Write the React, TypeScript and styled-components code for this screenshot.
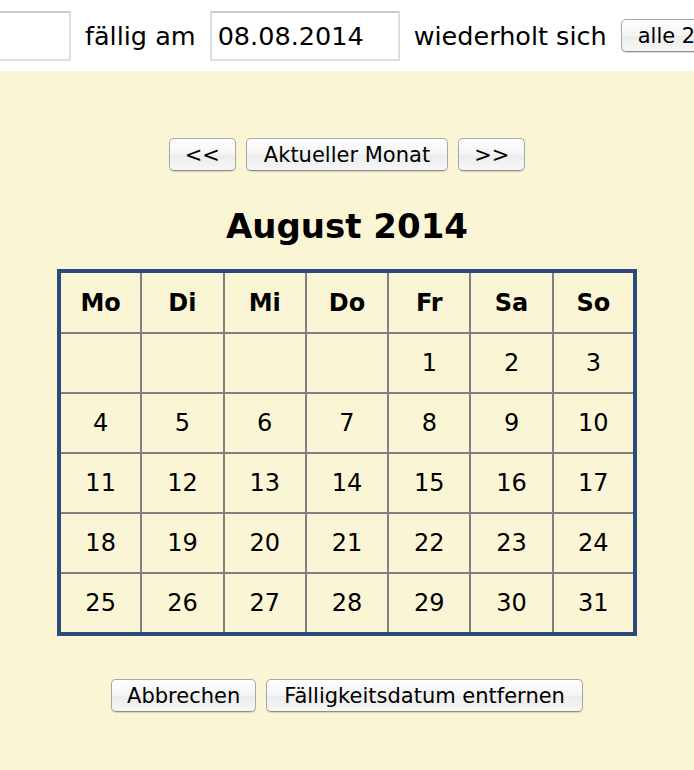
import React from "react";
import styled, { createGlobalStyle } from "styled-components";

const Global = createGlobalStyle`
  html, body { margin: 0; padding: 0; background: #faf6d5; }
  body { font-family: "DejaVu Sans", Verdana, sans-serif; overflow: hidden; }
`;

const Page = styled.div`
  width: 694px;
  height: 770px;
  display: flex;
  flex-direction: column;
  overflow: hidden;
`;

const TopBar = styled.div`
  background: #ffffff;
  height: 71px;
  display: flex;
  align-items: center;
  white-space: nowrap;
  overflow: hidden;
  font-family: "DejaVu Sans", sans-serif;
  font-size: 25.5px;
  color: #000;
`;

const TextField = styled.div<{ $w: number; $ml?: number }>`
  box-sizing: border-box;
  flex: none;
  width: ${(p) => p.$w}px;
  height: 50px;
  margin-left: ${(p) => p.$ml ?? 0}px;
  border: 2px solid #dedede;
  border-top-color: #cacaca;
  background: #fff;
  display: flex;
  align-items: center;
  padding-left: 6px;
  font-size: 25.5px;
`;

const Label = styled.span<{ $ml: number }>`
  flex: none;
  margin-left: ${(p) => p.$ml}px;
`;

const Button = styled.button<{ $px?: number }>`
  flex: none;
  box-sizing: border-box;
  height: 33px;
  padding: 0 ${(p) => p.$px ?? 15}px;
  font-family: "DejaVu Sans", sans-serif;
  font-size: 21px;
  color: #000;
  background: linear-gradient(#ffffff, #f4f4f4 50%, #ececec 51%, #f6f6f6);
  border: 1px solid #a8a8a8;
  border-bottom-color: #8e8e8e;
  border-radius: 5px;
  box-shadow: 0 1px 1px rgba(0, 0, 0, 0.15);
  cursor: default;
`;

const TopButton = styled(Button)`
  margin-left: 14px;
  padding: 0 16px;
`;

const Panel = styled.div`
  flex: 1;
  display: flex;
  flex-direction: column;
  align-items: center;
  padding-top: 67px;
`;

const NavRow = styled.div`
  display: flex;
  gap: 10px;
`;

const Title = styled.h1`
  margin: 32px 0 0;
  font-family: "DejaVu Sans", Verdana, sans-serif;
  font-size: 34px;
  font-weight: bold;
  line-height: 46px;
  text-align: center;
`;

const Table = styled.table`
  margin-top: 20px;
  border-collapse: collapse;
  border: 4px solid #2c4a7b;
  width: 580px;
  table-layout: fixed;
  font-family: "DejaVu Sans", Verdana, sans-serif;
`;

const Th = styled.th`
  height: 59px;
  border: 2px solid #808080;
  font-size: 24px;
  font-weight: bold;
  text-align: center;
  padding: 0;
`;

const Td = styled.td`
  height: 58px;
  border: 2px solid #808080;
  font-size: 24px;
  text-align: center;
  padding: 0;
`;

const BottomRow = styled.div`
  display: flex;
  gap: 10px;
  margin-top: 43px;
`;

const days = ["Mo", "Di", "Mi", "Do", "Fr", "Sa", "So"];
const weeks: (number | null)[][] = [
  [null, null, null, null, 1, 2, 3],
  [4, 5, 6, 7, 8, 9, 10],
  [11, 12, 13, 14, 15, 16, 17],
  [18, 19, 20, 21, 22, 23, 24],
  [25, 26, 27, 28, 29, 30, 31],
];

export default function App() {
  return (
    <Page>
      <Global />
      <TopBar>
        <TextField $w={90} $ml={-19} />
        <Label $ml={14}>fällig am</Label>
        <TextField $w={190} $ml={14}>08.08.2014</TextField>
        <Label $ml={14}>wiederholt sich</Label>
        <TopButton>alle 2 Wochen</TopButton>
      </TopBar>
      <Panel>
        <NavRow>
          <Button>&lt;&lt;</Button>
          <Button $px={17}>Aktueller Monat</Button>
          <Button>&gt;&gt;</Button>
        </NavRow>
        <Title>August 2014</Title>
        <Table>
          <thead>
            <tr>
              {days.map((d) => (
                <Th key={d}>{d}</Th>
              ))}
            </tr>
          </thead>
          <tbody>
            {weeks.map((w, i) => (
              <tr key={i}>
                {w.map((d, j) => (
                  <Td key={j}>{d ?? ""}</Td>
                ))}
              </tr>
            ))}
          </tbody>
        </Table>
        <BottomRow>
          <Button>Abbrechen</Button>
          <Button $px={17}>Fälligkeitsdatum entfernen</Button>
        </BottomRow>
      </Panel>
    </Page>
  );
}
